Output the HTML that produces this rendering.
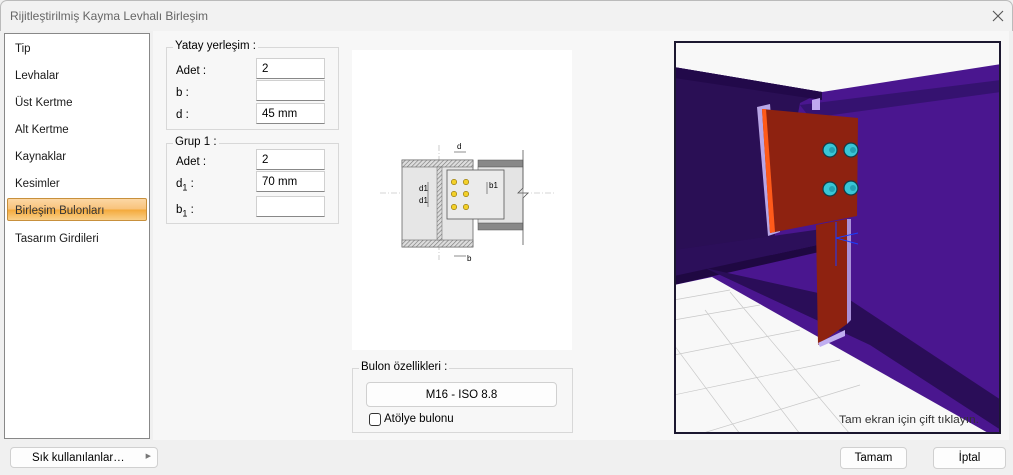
<!DOCTYPE html>
<html><head><meta charset="utf-8"><style>
*{box-sizing:border-box;margin:0;padding:0}
body{width:1013px;height:475px;background:#f0f0f0;font-family:"Liberation Sans",sans-serif;font-size:11.5px;color:#000;position:relative;overflow:hidden}
.abs{position:absolute}
.title{left:0;top:0;width:1013px;height:31px;background:#f2f2f2;border:1px solid #bbb;border-bottom:none;border-radius:7px 7px 0 0}
.title span{position:absolute;left:9px;top:8px;font-size:12px;color:#666}
.content{left:153px;top:31px;width:856px;height:409px;background:#f7f7f7}
.list{left:4px;top:33px;width:146px;height:406px;background:#fff;border:1px solid #888}
.item{position:absolute;left:10px;font-size:11.5px;color:#1a1a1a}
.sel{position:absolute;left:2px;top:164px;width:140px;height:23px;border:1px solid #c8903c;border-radius:2px;background:linear-gradient(#fcd7a4,#f8c27a 50%,#f4a93a 51%,#f9d08a);}
.grp{position:absolute;border:1px solid #d8d8d8}
.grp .lg{position:absolute;top:-8px;left:6px;background:#f7f7f7;padding:0 2px;font-size:11.5px}
.lbl{position:absolute;font-size:11.5px}
.inp{position:absolute;width:69px;height:21px;background:#fff;border:1px solid #d0d0d0;border-bottom:1px solid #888;font-size:11.5px;padding:4px 5px 0}
.btn{position:absolute;background:#fdfdfd;border:1px solid #d0d0d0;border-radius:4px;font-size:11.5px;text-align:center}
</style></head><body>
<div class="abs title"><span>Rijitleştirilmiş Kayma Levhalı Birleşim</span>
<svg class="abs" style="left:991px;top:9px" width="12" height="12"><path d="M1 1L11 11M11 1L1 11" stroke="#555" stroke-width="1.1"/></svg></div>
<div class="abs content"></div>
<div class="abs list">
<div class="item" style="top:9px">Tip</div>
<div class="item" style="top:36px">Levhalar</div>
<div class="item" style="top:63px">Üst Kertme</div>
<div class="item" style="top:90px">Alt Kertme</div>
<div class="item" style="top:117px">Kaynaklar</div>
<div class="item" style="top:144px">Kesimler</div>
<div class="sel"></div>
<div class="item" style="top:171px;color:#333">Birleşim Bulonları</div>
<div class="item" style="top:199px">Tasarım Girdileri</div>
</div>

<div class="grp" style="left:166px;top:47px;width:173px;height:83px"><span class="lg">Yatay yerleşim :</span></div>
<div class="lbl" style="left:176px;top:65px">Adet :</div>
<div class="lbl" style="left:176px;top:87px">b :</div>
<div class="lbl" style="left:176px;top:109px">d :</div>
<div class="inp" style="left:256px;top:58px">2</div>
<div class="inp" style="left:256px;top:80px"></div>
<div class="inp" style="left:256px;top:103px">45 mm</div>

<div class="grp" style="left:166px;top:143px;width:173px;height:81px"><span class="lg">Grup 1 :</span></div>
<div class="lbl" style="left:176px;top:156px">Adet :</div>
<div class="lbl" style="left:176px;top:178px">d<sub style="font-size:9px">1</sub> :</div>
<div class="lbl" style="left:176px;top:204px">b<sub style="font-size:9px">1</sub> :</div>
<div class="inp" style="left:256px;top:149px">2</div>
<div class="inp" style="left:256px;top:171px">70 mm</div>
<div class="inp" style="left:256px;top:196px"></div>

<div class="abs" style="left:352px;top:50px;width:220px;height:300px;background:#fff"></div>
<svg class="abs" style="left:380px;top:130px" width="180" height="140" viewBox="0 0 180 140">
<defs><pattern id="h" width="3" height="3" patternUnits="userSpaceOnUse" patternTransform="rotate(45)"><rect width="3" height="3" fill="#ddd"/><line x1="0" y1="0" x2="0" y2="3" stroke="#777" stroke-width="1.2"/></pattern></defs>
<line x1="0" y1="63" x2="175" y2="63" stroke="#aaa" stroke-width=".6" stroke-dasharray="6 2 1 2"/>
<line x1="59" y1="15" x2="59" y2="130" stroke="#aaa" stroke-width=".6" stroke-dasharray="6 2 1 2"/>
<rect x="22" y="30" width="71" height="87" fill="#e6e6e6" stroke="#666" stroke-width=".8"/>
<rect x="22" y="30" width="71" height="7" fill="url(#h)" stroke="#666" stroke-width=".6"/>
<rect x="22" y="110" width="71" height="7" fill="url(#h)" stroke="#666" stroke-width=".6"/>
<rect x="57" y="37" width="5" height="73" fill="url(#h)" stroke="#666" stroke-width=".5"/>
<rect x="98" y="30" width="45" height="7" fill="#888" stroke="#555" stroke-width=".5"/>
<rect x="98" y="93" width="45" height="7" fill="#888" stroke="#555" stroke-width=".5"/>
<rect x="98" y="37" width="45" height="56" fill="#e4e4e4" stroke="#666" stroke-width=".6"/>
<path d="M143 20V58L138 63L148 63L143 68V115" fill="none" stroke="#555" stroke-width=".8"/>
<rect x="67" y="40" width="57" height="49" fill="#ebebeb" stroke="#555" stroke-width=".8"/>
<g fill="#f3d02a" stroke="#8a6d00" stroke-width=".6"><circle cx="74" cy="52" r="2.7"/><circle cx="86" cy="52" r="2.7"/><circle cx="74" cy="64" r="2.7"/><circle cx="86" cy="64" r="2.7"/><circle cx="74" cy="77" r="2.7"/><circle cx="86" cy="77" r="2.7"/></g>
<text x="77" y="19" font-size="8" font-family="Liberation Sans">d</text>
<line x1="74" y1="22" x2="86" y2="22" stroke="#444" stroke-width=".6"/>
<text x="39" y="61" font-size="8" font-family="Liberation Sans">d1</text>
<text x="39" y="73" font-size="8" font-family="Liberation Sans">d1</text>
<line x1="48" y1="52" x2="48" y2="77" stroke="#444" stroke-width=".6"/>
<text x="109" y="58" font-size="8" font-family="Liberation Sans">b1</text>
<line x1="107" y1="52" x2="107" y2="64" stroke="#444" stroke-width=".6"/>
<text x="87" y="131" font-size="8" font-family="Liberation Sans">b</text>
<line x1="74" y1="126" x2="86" y2="126" stroke="#444" stroke-width=".6"/>
</svg>

<div class="grp" style="left:352px;top:368px;width:221px;height:65px"><span class="lg">Bulon özellikleri :</span></div>
<div class="btn" style="left:366px;top:382px;width:191px;height:25px;padding-top:6px">M16 - ISO 8.8</div>
<div class="abs" style="left:369px;top:413px;width:12px;height:13px;border:1px solid #333;border-radius:3px;background:#fff"></div>
<div class="lbl" style="left:384px;top:413px">Atölye bulonu</div>

<div class="abs" style="left:674px;top:41px;width:327px;height:393px;border:2px solid #1c1830;overflow:hidden;background:#f8f8f8">
<svg width="323" height="389" viewBox="676 43 323 389" style="display:block">
<polygon points="674,67 822,92 1001,64 1001,434 674,434" fill="#4a168f"/>
<polygon points="674,67 822,92 800,103 770,260 674,280" fill="#2a0f55"/>
<polygon points="674,67 822,92 822,100 674,78" fill="#22094a"/>
<polygon points="800,105 1001,80 1001,92 810,118" fill="#351270"/>
<polygon points="674,250 850,225 850,238 674,276" fill="#2c0f5a"/>
<polygon points="674,276 850,238 850,245 674,285" fill="#1f0842"/>
<polygon points="705,268 850,300 1001,400 1001,430 870,345 720,275" fill="#2a0d58"/>
<polygon points="674,285 712,277 990,434 674,434" fill="#f8f8f8"/>
<g stroke="#c8c8c8" stroke-width=".7" fill="none"><path d="M674,300 L730,290 M674,320 L760,305 M674,355 L800,330 M674,395 L840,360 M700,434 L860,385 M705,310 L800,434 M674,345 L740,434 M730,292 L850,434"/></g>
<polygon points="757,107 770,104 780,232 768,236" fill="#b9a6e6"/>
<polygon points="762,109 858,118 857,216 770,233" fill="#8e2210"/>
<polygon points="762,109 766,109 775,232 770,233" fill="#ff5a1a"/>
<polygon points="812,100 820,98 820,110 812,110" fill="#c0a8ef"/>
<polygon points="816,225 847,219 847,324 818,345" fill="#8e2210"/>
<polygon points="847,219 851,219 851,320 847,324" fill="#a890d8"/>
<polygon points="818,343 845,330 845,336 820,347" fill="#c0aef0"/>
<g stroke="#1a3cff" stroke-width="1"><line x1="836" y1="222" x2="836" y2="266"/><line x1="836" y1="238" x2="858" y2="233"/><line x1="836" y1="238" x2="858" y2="244"/></g>
<g fill="#39c6d6" stroke="#0d3f4a" stroke-width="1.2"><circle cx="830" cy="150" r="7"/><circle cx="851" cy="150" r="7"/><circle cx="830" cy="189" r="7"/><circle cx="851" cy="188" r="7"/></g>
<g fill="#23a2b4"><circle cx="832" cy="150" r="3"/><circle cx="853" cy="150" r="3"/><circle cx="832" cy="189" r="3"/><circle cx="853" cy="188" r="3"/></g>
<text x="839" y="423" font-size="11" font-family="Liberation Sans" fill="#333" textLength="140" lengthAdjust="spacingAndGlyphs">Tam ekran için çift tıklayın.</text>
</svg></div>

<div class="btn" style="left:10px;top:447px;width:148px;height:21px;padding-top:4px;text-align:left;padding-left:21px">Sık kullanılanlar…<span style="position:absolute;right:6px;top:4px;font-size:7px;color:#777">▶</span></div>
<div class="btn" style="left:840px;top:447px;width:67px;height:22px;padding-top:4px">Tamam</div>
<div class="btn" style="left:933px;top:447px;width:73px;height:22px;padding-top:4px">İptal</div>
</body></html>
